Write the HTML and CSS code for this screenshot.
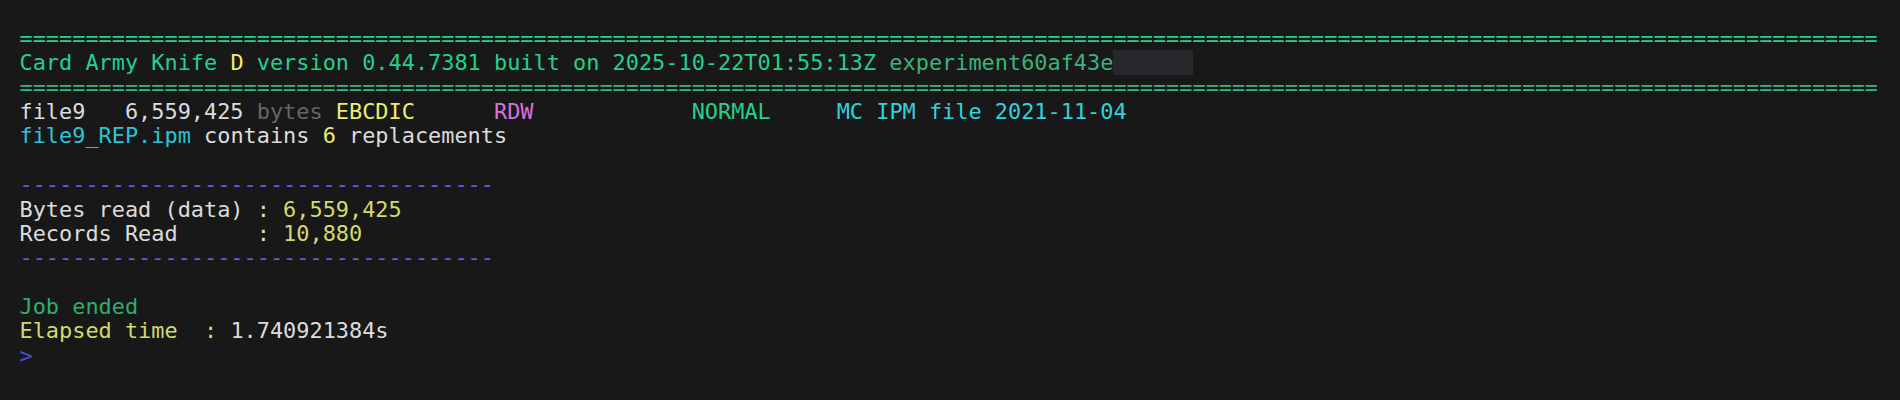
FILE: index.html
```html
<!DOCTYPE html>
<html lang="en">
<head>
<meta charset="utf-8">
<title>Card Army Knife</title>
<link rel="stylesheet" href="styles.css">
</head>
<body>
<main class="term">
<div class="ln g1">=============================================================================================================================================</div>
<div class="ln"><span class="g1">Card Army Knife </span><span class="yl">D</span><span class="g1"> version 0.44.7381 built on 2025-10-22T01:55:13Z </span><span class="g2">experiment60af43e</span><span class="redact">      </span></div>
<div class="ln g2">=============================================================================================================================================</div>
<div class="ln"><span class="wt">file9   6,559,425 </span><span class="gy">bytes</span> <span class="yl">EBCDIC</span>      <span class="mg">RDW</span>            <span class="g1">NORMAL</span>     <span class="cy2">MC IPM file 2021-11-04</span></div>
<div class="ln"><span class="cy">file9_REP.ipm</span><span class="wt"> contains </span><span class="yl">6</span><span class="wt"> replacements</span></div>
<div class="ln"> </div>
<div class="ln pu">------------------------------------</div>
<div class="ln"><span class="wt">Bytes read (data) : </span><span class="yg">6,559,425</span></div>
<div class="ln"><span class="wt">Records Read      : </span><span class="yg">10,880</span></div>
<div class="ln pu">------------------------------------</div>
<div class="ln"> </div>
<div class="ln g3">Job ended</div>
<div class="ln"><span class="yg">Elapsed time  :</span><span class="wt"> 1.740921384s</span></div>
<div class="ln bl">&gt;</div>
</main>
</body>
</html>
```
FILE: styles.css
```css
html, body {
  margin: 0;
  padding: 0;
  background: #181818;
}
body {
  width: 1900px;
  height: 400px;
  overflow: hidden;
}
.term {
  padding: 27px 0 0 19.5px;
  font-family: "DejaVu Sans Mono", monospace;
  font-size: 21.9px;
  line-height: 24.36px;
  color: #dcdcdc;
}
.ln {
  white-space: pre;
  height: 24.36px;
}
.g1 { color: #23d18b; }
.g2 { color: #38b47c; }
.g3 { color: #30ad6a; }
.yl { color: #ecec6e; }
.yg { color: #d3da6c; }
.wt { color: #dcdcdc; }
.gy { color: #666666; }
.mg { color: #dc6fd8; }
.cy { color: #29c4d6; }
.cy2 { color: #2ed3de; }
.pu { color: #7257e6; }
.bl { color: #4b4bd6; }
.redact { background: #27272c; }
```
